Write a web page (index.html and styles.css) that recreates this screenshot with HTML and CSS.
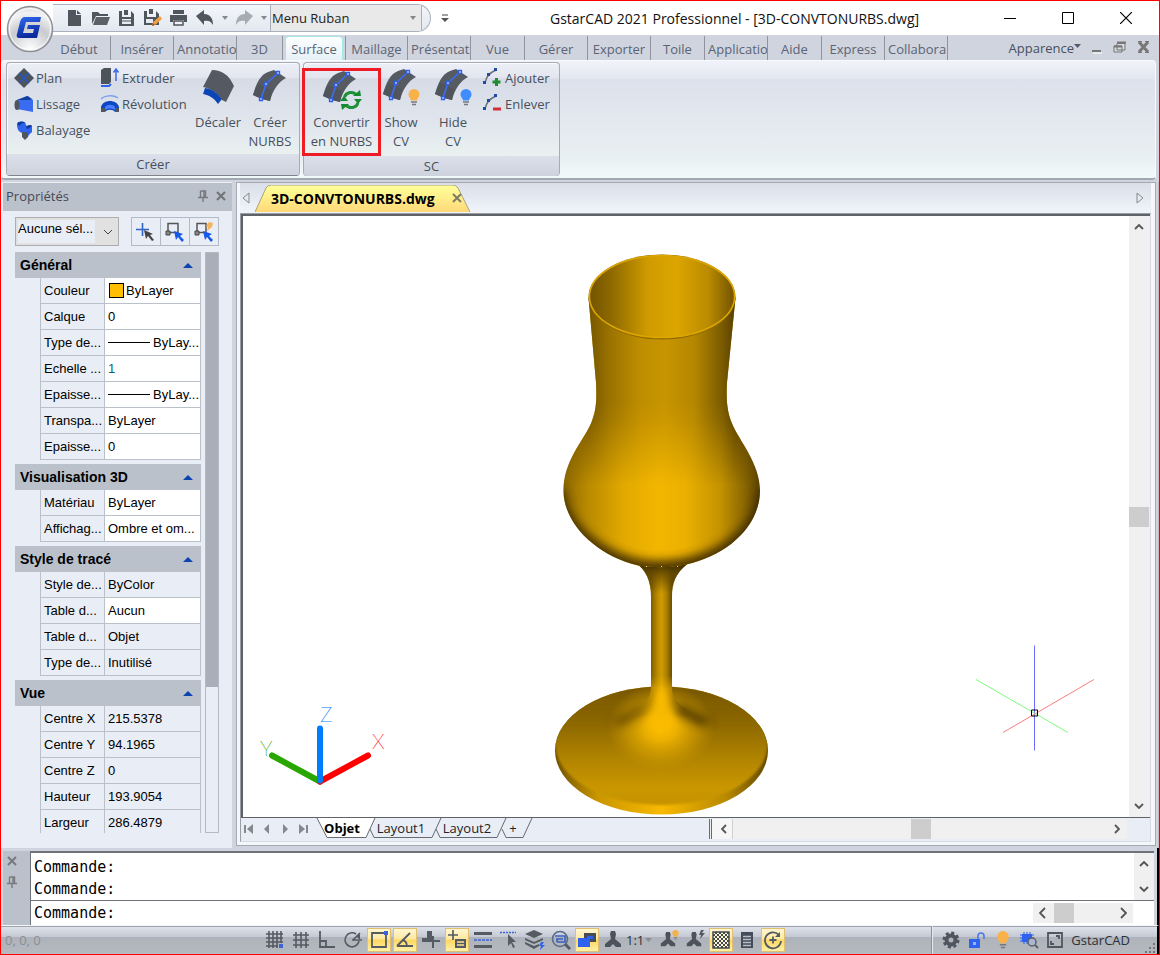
FILE: index.html
```html
<!DOCTYPE html>
<html lang="fr">
<head>
<meta charset="utf-8">
<title>GstarCAD 2021 Professionnel - [3D-CONVTONURBS.dwg]</title>
<link rel="stylesheet" href="styles.css">
</head>
<body>
<svg class="defs" width="0" height="0" aria-hidden="true">
  <symbol id="nurbs" viewBox="0 0 36 36">
    <path d="M1 25C4 14 8 5 16 2l6-2 12 8C26 12 21 20 18 31l-8-2z" fill="#565b62"/>
    <path d="M1 25l5-11 14 6-2 11-8-2z" fill="#50555c"/>
    <path d="M9 29l5-15L26 3" fill="none" stroke="#3d6cf0" stroke-width="1.600"/>
    <path d="M7.500 27.500h3v3h-3zM12.500 12.500h3v3h-3zM24.500 1.500h3v3h-3z" fill="#c8d4f5" stroke="#2f5fe8" stroke-width="1.300"/>
  </symbol>
  <symbol id="bulb" viewBox="0 0 12 17">
    <path d="M6 0a5.500 5.500 0 0 1 5.500 5.500c0 2.500-2 3.500-2.500 6H3C2.500 9 .5 8 .5 5.500A5.500 5.500 0 0 1 6 0z"/>
    <path d="M3 13h6M4 15.500h4" stroke="#77797d" stroke-width="1.400"/>
  </symbol>
  <symbol id="pin" viewBox="0 0 10 12">
    <path d="M2.500 1h5v6M2.500 1v6M6 1v6M0 7.500h10M5 8v4" fill="none" stroke="#77797d" stroke-width="1.400"/>
  </symbol>
  <symbol id="cross" viewBox="0 0 10 10">
    <path d="M1 1l8 8M9 1L1 9" fill="none" stroke="currentColor" stroke-width="2"/>
  </symbol>
  <symbol id="chev" viewBox="0 0 10 6">
    <path d="M1 1l4 4 4-4" fill="none" stroke="currentColor" stroke-width="1.800"/>
  </symbol>
  <symbol id="curve" viewBox="0 0 20 20">
    <path d="M2 15C3 9 6 5 13 2" fill="none" stroke="#6b7078" stroke-width="1.500"/>
    <path d="M0 13h3v3H0zM4 5h3v3H4zM11 0h3v3h-3z" fill="#1d4ca8"/>
  </symbol>
  <symbol id="figure" viewBox="0 0 20 20">
    <path d="M7 4l1-3h4l1 3-1 5 6 5v3h-5l-3-3-3 3H2v-3l6-5z" fill="#4d535b"/>
  </symbol>
</svg>

<div class="app">
  <header class="titlebar">
    <div class="quick">
      <button class="qbtn" aria-label="Nouveau"><svg width="18" height="18"><path d="M2 1h8v5h5v11H2z" fill="#50565e"/><path d="M11 1l4 4h-4z" fill="#50565e"/></svg></button>
      <button class="qbtn" aria-label="Ouvrir"><svg width="20" height="18"><path d="M1 15V3h6l2 2h8v2H5z" fill="#50565e"/><path d="M5 8h14l-3 8H2z" fill="#5b6168"/></svg></button>
      <button class="qbtn" aria-label="Enregistrer"><svg width="18" height="18"><path d="M1 2h3v6h9V2l3 3v12H1zM6 1h4v5H6z" fill="#50565e"/><path d="M4 10h9v5H4z" fill="#e7eaf0"/><path d="M4 12h9" stroke="#50565e"/></svg></button>
      <button class="qbtn" aria-label="Enregistrer sous"><svg width="20" height="19"><path d="M1 2h3v6h9V2l3 3v11H1zM6 0h4v5H6z" fill="#50565e"/><path d="M3 10h7v4H3z" fill="#e7eaf0"/><path d="M9 17l1-4 7-6 2 3-7 6z" fill="#f0a040"/><path d="M9 17l1-3 2 2z" fill="#8d5a20"/></svg></button>
      <button class="qbtn" aria-label="Imprimer"><svg width="20" height="18"><path d="M4 1h11v4H4zM1 6h17v7h-3v-2H4v2H1z" fill="#50565e"/><path d="M5 12h9v4H5z" fill="#f1f3f6" stroke="#50565e" stroke-width="1.500"/></svg></button>
      <button class="qbtn" aria-label="Annuler"><svg width="20" height="16"><path d="M1 6l8-6v4c6 0 9 4 9 11-2-4-5-5-9-4v4z" fill="#50565e"/></svg></button>
      <button class="qdrop" aria-label="Liste annuler"><svg width="6" height="4"><path d="M0 0h6L3 4z" fill="#85888e"/></svg></button>
      <button class="qbtn" aria-label="Rétablir"><svg width="20" height="16"><path d="M19 6l-8-6v4C5 4 2 8 2 15c2-4 5-5 9-4v4z" fill="#a7abb2"/></svg></button>
      <button class="qdrop" aria-label="Liste rétablir"><svg width="6" height="4"><path d="M0 0h6L3 4z" fill="#85888e"/></svg></button>
      <div class="workspace">
        <select aria-label="Espace de travail"><option>Menu Ruban</option></select>
        <svg width="6" height="4"><path d="M0 0h6L3 4z" fill="#85888e"/></svg>
      </div>
    </div>
    <button class="customize" aria-label="Personnaliser"><svg width="8" height="9"><path d="M1 1h6" stroke="#444"/><path d="M0 4h8L4 8z" fill="#555"/></svg></button>
    <h1 class="title">GstarCAD 2021 Professionnel - [3D-CONVTONURBS.dwg]</h1>
    <div class="winbtns">
      <button aria-label="Réduire"><svg width="12" height="12"><path d="M0 6.500h12" stroke="#000"/></svg></button>
      <button aria-label="Agrandir"><svg width="12" height="12"><path d="M.5.5h11v11H.5z" fill="none" stroke="#000"/></svg></button>
      <button aria-label="Fermer"><svg width="12" height="12"><path d="M0 0l12 12M12 0L0 12" stroke="#000" stroke-width="1.200"/></svg></button>
    </div>
    <button class="logo" aria-label="GstarCAD">
      <svg width="48" height="48" viewBox="0 0 48 48">
        <defs>
          <radialGradient id="orb" cx=".5" cy=".95" r="1"><stop offset="0" stop-color="#fff"/><stop offset=".5" stop-color="#c9cbcf"/><stop offset=".8" stop-color="#f1f2f3"/><stop offset="1" stop-color="#d4d5d8"/></radialGradient>
          <linearGradient id="gblue" x1="0" y1="0" x2=".3" y2="1"><stop offset="0" stop-color="#2f6af0"/><stop offset="1" stop-color="#0b2a9c"/></linearGradient>
        </defs>
        <circle cx="24" cy="24" r="22.500" fill="url(#orb)" stroke="#8d9096" stroke-width="1.500"/>
        <circle cx="24" cy="24" r="20.500" fill="none" stroke="#fff" stroke-opacity=".8"/>
        <path d="M19 12h16l-1 5H20l-3 11h10l1-4h-7l1-4h12l-3 13H13c-2 0-3-2-2-4l3-12c1-3 2-5 5-5z" fill="url(#gblue)"/>
      </svg>
    </button>
  </header>

  <nav class="tabs">
    <button class="tab w62">Début</button><button class="tab w62">Insérer</button><button class="tab w62 cut">Annotatio</button><button class="tab w46">3D</button><button class="tab active">Surface</button><button class="tab w62 first">Maillage</button><button class="tab w62 cut">Présentat</button><button class="tab w54">Vue</button><button class="tab w62">Gérer</button><button class="tab w62">Exporter</button><button class="tab w54">Toile</button><button class="tab w62 cut">Applicatio</button><button class="tab w54">Aide</button><button class="tab w62">Express</button><button class="tab w62 cut">Collabora</button>
    <button class="appearance">Apparence<svg width="7" height="4"><path d="M0 0h7L3.500 4z" fill="#555b66"/></svg></button>
    <div class="mdi">
      <button aria-label="Réduire le dessin"><svg width="12" height="14"><path d="M1 11h9" stroke="#777" stroke-width="2"/><path d="M2 13h9" stroke="#fff"/></svg></button>
      <button aria-label="Restaurer le dessin"><svg width="14" height="14"><path d="M4 3.500h8V10H4zM1 6h8v6H1z" fill="#d6dae2" stroke="#777"/><path d="M4 2.500h9M1 6.500h8" stroke="#777" stroke-width="2"/></svg></button>
      <button aria-label="Fermer le dessin"><svg width="14" height="14"><path d="M2 2l9 10M11 2L2 12" stroke="#777" stroke-width="3"/><path d="M1 1.500h4M8 1.500h4M1 12.500h4M8 12.500h4" stroke="#777"/></svg></button>
    </div>
  </nav>

  <section class="ribbon">
    <div class="panel create">
      <div class="tools">
        <div class="col">
          <button class="small"><svg width="20" height="20"><path d="M10 0l10 10-10 10L0 10z" fill="#4d535b"/><path d="M5 5l10 10M15 5L5 15" stroke="#2456c8" stroke-width="1.500"/></svg>Plan</button>
          <button class="small"><svg width="20" height="20"><path d="M3 6l11-4 5 4v12L3 15z" fill="#3a6cf2"/><path d="M3 6l10-4 5 3-3 1z" fill="#123f9e"/><ellipse cx="3" cy="11" rx="2.500" ry="5" fill="#50565e"/></svg>Lissage</button>
          <button class="small"><svg width="20" height="20"><path d="M3 5c0-3 4-4 7-3s1 4 3 4 3-2 5 0v6c-2 2-3 2-4 5h-5v-4c-3 0-6-3-6-8z" fill="#2f63ee"/><path d="M3 4c1-3 6-3 8-1-2 0-4 0-5 3zM12 6c2 0 4-2 6 0-2 1-3 3-5 3z" fill="#0d3b9f"/><path d="M8 12h6v5l-3 3-3-3z" fill="#50565e"/></svg>Balayage</button>
        </div>
        <div class="col second">
          <button class="small"><svg width="20" height="20"><path d="M1 2l3-2h7v14l-2 2H1z" fill="#4d535b"/><path d="M1 18h8l2-2" stroke="#2f63ee" stroke-width="2" fill="none"/><path d="M16 13V2M13.500 4.500L16 1l2.500 3.500" stroke="#3c6ae6" stroke-width="1.500" fill="none"/></svg>Extruder</button>
          <button class="small"><svg width="20" height="20"><path d="M1 5C5 1 14 1 18 4" fill="none" stroke="#7d9df0" stroke-width="1.500"/><path d="M1 13c2-8 16-8 18 0v5h-4c-2-3-8-3-10 0H1z" fill="#0d48c0"/><path d="M1 14h4v4H1zM15 14h4v4h-4z" fill="#50565e"/><path d="M5 13c2-3 8-3 10 0v3c-3-2-7-2-10 0z" fill="#4a7cff"/></svg>Révolution</button>
        </div>
        <button class="big"><svg width="36" height="36"><path d="M12 1c10 0 17 5 22 16l-8 16-4-2C18 24 12 20 3 18z" fill="#555a62"/><path d="M5 19c8 1 13 6 17 11l-4 5C14 29 9 26 3 25z" fill="#0c45b4"/></svg><span>Décaler</span></button>
        <button class="big"><svg width="36" height="36"><use href="#nurbs"/></svg><span>Créer<br>NURBS</span></button>
      </div>
      <h2>Créer</h2>
    </div>
    <div class="panel sc">
      <div class="tools">
        <button class="big marked"><svg width="42" height="40"><use href="#nurbs" width="36" height="36"/><path d="M22.500 26a7 7 0 0 1 12-2M36 32a7 7 0 0 1-12 2" fill="none" stroke="#1d9038" stroke-width="3"/><path d="M31 25h8l-1-6zM19 33h8l-7 6zM18 30h8l-4-5zM32 28h8l-4 5z" fill="#158a31"/></svg><span>Convertir<br>en NURBS</span></button>
        <button class="big narrow"><svg width="38" height="38"><use href="#nurbs" width="36" height="36"/><use href="#bulb" x="26" y="20" width="12" height="17" fill="#f9b24a"/></svg><span>Show<br>CV</span></button>
        <button class="big hide"><svg width="38" height="38"><use href="#nurbs" width="36" height="36"/><use href="#bulb" x="26" y="20" width="12" height="17" fill="#3f8cff"/></svg><span>Hide<br>CV</span></button>
        <div class="col last">
          <button class="small"><svg width="20" height="20"><use href="#curve" width="20" height="20"/><path d="M13.500 10v8M9.500 14h8" stroke="#218a35" stroke-width="3"/></svg>Ajouter</button>
          <button class="small"><svg width="20" height="20"><use href="#curve" width="20" height="20"/><path d="M10 15h8" stroke="#d22f3a" stroke-width="3"/></svg>Enlever</button>
        </div>
      </div>
      <h2>SC</h2>
    </div>
  </section>

  <main class="main">
    <aside class="props">
      <header class="phead"><h2>Propriétés</h2>
        <button aria-label="Épingler"><svg width="10" height="12"><use href="#pin"/></svg></button>
        <button aria-label="Fermer"><svg width="10" height="10"><use href="#cross"/></svg></button>
      </header>
      <div class="pick">
        <div class="selbox"><select aria-label="Sélection"><option>Aucune sél...</option></select><svg width="10" height="6" viewBox="0 0 10 6"><path d="M1 1l4 4 4-4" fill="none" stroke="#444"/></svg></div>
        <div class="pickbtns">
          <button aria-label="Ajouter à la sélection"><svg width="20" height="20"><path d="M6.500 1v13M0 7.500h13" stroke="#2f63c8" stroke-width="1.600"/><path d="M8 8l9 4-3 1 4 5-2 1-4-5-2 3z" fill="#444"/></svg></button>
          <button aria-label="Sélectionner des objets"><svg width="20" height="20"><path d="M3 1.500h10v9H3z" fill="none" stroke="#555" stroke-width="1.500"/><path d="M1 9h4v4H1z" fill="#888" stroke="#444"/><path d="M9 9l9 3-3 2 4 4-2 2-4-5-2 3z" fill="#1559e8"/></svg></button>
          <button aria-label="Sélection rapide"><svg width="20" height="20"><path d="M3 1.500h9v9H3z" fill="none" stroke="#555" stroke-width="1.500"/><path d="M1 9h4v4H1z" fill="#888" stroke="#444"/><path d="M15 0l4 1-1 4-5 4 1-4-2-1z" fill="#f5b45a"/><path d="M9 9l9 3-3 2 4 4-2 2-4-5-2 3z" fill="#1559e8"/></svg></button>
        </div>
      </div>
      <div class="gridwrap">
        <div class="grid">
          <section><h3>Général<i></i></h3>
            <table>
              <tr><th>Couleur</th><td><span class="swatch"></span>ByLayer</td></tr>
              <tr><th>Calque</th><td>0</td></tr>
              <tr><th>Type de...</th><td><span class="ltype"></span>ByLay...</td></tr>
              <tr><th>Echelle ...</th><td class="edit">1</td></tr>
              <tr><th>Epaisse...</th><td><span class="ltype"></span>ByLay...</td></tr>
              <tr><th>Transpa...</th><td>ByLayer</td></tr>
              <tr><th>Epaisse...</th><td>0</td></tr>
            </table></section>
          <section><h3>Visualisation 3D<i></i></h3>
            <table>
              <tr><th>Matériau</th><td>ByLayer</td></tr>
              <tr><th>Affichag...</th><td>Ombre et om...</td></tr>
            </table></section>
          <section><h3>Style de tracé<i></i></h3>
            <table>
              <tr><th>Style de...</th><td class="ro">ByColor</td></tr>
              <tr><th>Table d...</th><td>Aucun</td></tr>
              <tr><th>Table d...</th><td class="ro">Objet</td></tr>
              <tr><th>Type de...</th><td class="ro">Inutilisé</td></tr>
            </table></section>
          <section><h3>Vue<i></i></h3>
            <table>
              <tr><th>Centre X</th><td class="ro">215.5378</td></tr>
              <tr><th>Centre Y</th><td class="ro">94.1965</td></tr>
              <tr><th>Centre Z</th><td class="ro">0</td></tr>
              <tr><th>Hauteur</th><td class="ro">193.9054</td></tr>
              <tr><th>Largeur</th><td class="ro">286.4879</td></tr>
            </table></section>
        </div>
        <div class="pscroll"><div></div></div>
      </div>
    </aside>

    <section class="doc">
      <div class="doctabs">
        <button class="arrow" aria-label="Précédent"><svg width="8" height="12"><path d="M7 1v10L1 6z" fill="none" stroke="#85888e"/></svg></button>
        <div class="doctab">
          <svg class="shape" viewBox="0 0 216 27" preserveAspectRatio="none"><defs><linearGradient id="ytab" x1="0" y1="0" x2="0" y2="1"><stop offset="0" stop-color="#ffff9a"/><stop offset=".45" stop-color="#fff08a"/><stop offset="1" stop-color="#ffd878"/></linearGradient></defs><path d="M0 27L11 3q2-3 5-3h182q3 0 5 3l12 24" fill="url(#ytab)" stroke="#a9a27c"/></svg>
          <span>3D-CONVTONURBS.dwg</span>
          <button aria-label="Fermer l'onglet"><svg width="10" height="10"><use href="#cross"/></svg></button>
        </div>
        <button class="arrow next" aria-label="Suivant"><svg width="8" height="12"><path d="M1 1v10l6-5z" fill="none" stroke="#85888e"/></svg></button>
      </div>
      <div class="frame">
        <div class="view">
          <svg class="canvas" viewBox="243 217 886 600" role="img" aria-label="Verre 3D">
            <defs>
              <linearGradient id="cup" gradientUnits="userSpaceOnUse" x1="589" y1="0" x2="735" y2="0"><stop offset="0" stop-color="#765700"/><stop offset=".14" stop-color="#9a7200"/><stop offset=".35" stop-color="#be8e00"/><stop offset=".52" stop-color="#c79500"/><stop offset=".72" stop-color="#b58700"/><stop offset=".92" stop-color="#785900"/><stop offset="1" stop-color="#584000"/></linearGradient>
              <linearGradient id="bowl" gradientUnits="userSpaceOnUse" x1="563" y1="0" x2="760" y2="0"><stop offset="0" stop-color="#8a6600"/><stop offset=".12" stop-color="#b88900"/><stop offset=".3" stop-color="#e0a800"/><stop offset=".48" stop-color="#f3b600"/><stop offset=".62" stop-color="#ebb000"/><stop offset=".8" stop-color="#c39200"/><stop offset=".92" stop-color="#8a6700"/><stop offset="1" stop-color="#5c4400"/></linearGradient>
              <linearGradient id="fade" gradientUnits="userSpaceOnUse" x1="0" y1="405" x2="0" y2="485"><stop offset="0" stop-color="#fff"/><stop offset=".2" stop-color="#ddd"/><stop offset="1" stop-color="#000"/></linearGradient>
              <mask id="top" maskUnits="userSpaceOnUse" x="560" y="250" width="205" height="320"><path d="M560 250h205v320H560z" fill="url(#fade)"/></mask>
              <clipPath id="body"><path d="M588.500 298L596 383C597 402 596 412 591 424C583 442 563 462 563.500 492C564 524 596 556 638 566Q662 570 686 565C728 556 760 526 760 491C760 464 739 441 732 424C727 412 726 400 727 383L735.500 298z"/></clipPath>
              <clipPath id="foot"><ellipse cx="661.500" cy="751" rx="106.500" ry="64"/></clipPath>
              <linearGradient id="inside" x1="0" y1="0" x2="1" y2="0"><stop offset="0" stop-color="#725400"/><stop offset=".15" stop-color="#8e6900"/><stop offset=".4" stop-color="#cf9b00"/><stop offset=".6" stop-color="#dca500"/><stop offset=".82" stop-color="#ba8b00"/><stop offset="1" stop-color="#725300"/></linearGradient>
              <linearGradient id="stem" gradientUnits="userSpaceOnUse" x1="651" y1="0" x2="672" y2="0"><stop offset="0" stop-color="#7d5d00"/><stop offset=".3" stop-color="#b98a00"/><stop offset=".5" stop-color="#d19c00"/><stop offset=".75" stop-color="#a97e00"/><stop offset="1" stop-color="#694d00"/></linearGradient>
              <linearGradient id="neck" gradientUnits="userSpaceOnUse" x1="0" y1="564" x2="0" y2="594"><stop offset="0" stop-color="#3d2c00"/><stop offset=".35" stop-color="#5d4400" stop-opacity=".75"/><stop offset="1" stop-color="#5d4400" stop-opacity="0"/></linearGradient>
              <linearGradient id="disc" gradientUnits="userSpaceOnUse" x1="0" y1="687" x2="0" y2="806"><stop offset="0" stop-color="#775700"/><stop offset=".3" stop-color="#8c6700"/><stop offset=".6" stop-color="#b08300"/><stop offset=".85" stop-color="#ca9700"/><stop offset="1" stop-color="#c59300"/></linearGradient>
              <linearGradient id="edge" gradientUnits="userSpaceOnUse" x1="555" y1="0" x2="768" y2="0"><stop offset="0" stop-color="#6e5100"/><stop offset=".2" stop-color="#c99600"/><stop offset=".5" stop-color="#f8b900"/><stop offset=".8" stop-color="#b98a00"/><stop offset="1" stop-color="#624800"/></linearGradient>
              <radialGradient id="glow" gradientUnits="userSpaceOnUse" cx="0" cy="0" r="1" gradientTransform="translate(661 728) scale(54 44)"><stop offset="0" stop-color="#fabb00"/><stop offset=".3" stop-color="#efb300" stop-opacity=".95"/><stop offset=".65" stop-color="#d8a200" stop-opacity=".6"/><stop offset="1" stop-color="#c59300" stop-opacity="0"/></radialGradient>
              <linearGradient id="flare" gradientUnits="userSpaceOnUse" x1="640" y1="0" x2="683" y2="0"><stop offset="0" stop-color="#9a7200"/><stop offset=".3" stop-color="#c08f00"/><stop offset=".5" stop-color="#eab000"/><stop offset=".72" stop-color="#b88900"/><stop offset="1" stop-color="#6b4f00"/></linearGradient>
              <linearGradient id="flarefade" gradientUnits="userSpaceOnUse" x1="0" y1="676" x2="0" y2="718"><stop offset="0" stop-color="#000"/><stop offset=".3" stop-color="#fff"/><stop offset=".6" stop-color="#fff"/><stop offset="1" stop-color="#000"/></linearGradient>
              <mask id="flaremask" maskUnits="userSpaceOnUse" x="620" y="660" width="82" height="62"><path d="M620 660h82v62h-82z" fill="url(#flarefade)"/></mask>
              <filter id="soft" x="-50%" y="-50%" width="200%" height="200%"><feGaussianBlur stdDeviation="5"/></filter>
              <filter id="soft2" x="-50%" y="-50%" width="200%" height="200%"><feGaussianBlur stdDeviation="3"/></filter>
              <filter id="soft3"><feGaussianBlur stdDeviation="1"/></filter>
            </defs>
            <ellipse cx="661.500" cy="751" rx="106.500" ry="64" fill="url(#edge)"/>
            <g clip-path="url(#foot)">
              <ellipse cx="661.500" cy="745" rx="106" ry="60.500" fill="url(#disc)" filter="url(#soft3)"/>
              <ellipse cx="661" cy="728" rx="54" ry="44" fill="url(#glow)"/>
              <path d="M678 702q10 8 36 20l-14 4-22-12z" fill="#4a3500" opacity=".95" filter="url(#soft)"/>
              <path d="M646 702q-10 8-36 20l12 4 20-12z" fill="#5e4500" opacity=".85" filter="url(#soft)"/>
            </g>
            <path d="M651 590h21v98q0 5 2 9h-25q2-4 2-9z" fill="url(#stem)"/>
            <path d="M651 676v12C650 700 644 706 630 714l10 6h43l10-6C679 706 673 700 672 688v-12z" fill="url(#flare)" mask="url(#flaremask)"/>
            <path d="M658 690h7l10 34q-13 22-28 0z" fill="#fcbc00" opacity=".85" filter="url(#soft2)"/>
            <path d="M636 564c10 6 15 18 15 34h21c0-14 3-24 16-34z" fill="url(#stem)"/>
            <path d="M636 564c10 6 15 18 15 34h21c0-14 3-24 16-34z" fill="url(#neck)"/>
            <g clip-path="url(#body)">
              <path d="M560 290h204v285H560z" fill="url(#bowl)"/>
              <path d="M560 290h204v285H560z" fill="url(#cup)" mask="url(#top)"/>
              <path d="M555 490C555 527 596 560 638 569Q662 573 686 568C728 560 768 528 768 490" fill="none" stroke="#3d2c00" stroke-width="20" filter="url(#soft)" opacity=".9"/>
            </g>
            <ellipse cx="662" cy="297.500" rx="73.500" ry="42.500" fill="#8b6700"/>
            <ellipse cx="662" cy="297" rx="72.500" ry="41" fill="url(#inside)" stroke="#dda600" stroke-width="1.500"/>
            <path d="M646 567h1M661 567h1M677 567h1" stroke="#f5d060"/>
            <g class="ucs">
              <path d="M320 782l-48-26" stroke="#2aa600"/><path d="M320 782l48-26" stroke="#f00"/><path d="M320 781v-52" stroke="#007dff"/>
            </g>
            <g class="axes">
              <text x="260" y="756" fill="#2aa600">Y</text><text x="372" y="749" fill="#f00">X</text><text x="320" y="722" fill="#007dff">Z</text>
            </g>
            <g fill="none">
              <path d="M1034.500 646v105" stroke="#6c6cff"/>
              <path d="M976 680l92 53" stroke="#7dfa7d"/><path d="M1094 680l-91 53" stroke="#fa7d7d"/>
              <path d="M1031.500 710.500h6v6h-6z" stroke="#000"/>
            </g>
          </svg>
          <div class="vscroll">
            <button aria-label="Haut"><svg class="flip" width="10" height="6"><use href="#chev"/></svg></button>
            <div class="thumb"></div>
            <button aria-label="Bas"><svg width="10" height="6"><use href="#chev"/></svg></button>
          </div>
        </div>
        <div class="layouts">
          <div class="lnav">
            <button aria-label="Premier"><svg width="10" height="10"><path d="M1 1v8" stroke="#85888e" stroke-width="2"/><path d="M9 0v10L3 5z" fill="#85888e"/></svg></button>
            <button aria-label="Précédente"><svg width="10" height="10"><path d="M7 0v10L2 5z" fill="#85888e"/></svg></button>
            <button aria-label="Suivante"><svg width="10" height="10"><path d="M3 0v10l5-5z" fill="#85888e"/></svg></button>
            <button aria-label="Dernier"><svg width="10" height="10"><path d="M9 1v8" stroke="#85888e" stroke-width="2"/><path d="M1 0v10l6-5z" fill="#85888e"/></svg></button>
          </div>
          <div class="ltabs">
            <svg class="shape" width="220" height="21"><path d="M1 0l10 19.500h39L58.500 0z" fill="#fff"/><path d="M1 0l10 19.500h39L59 0M54 11l4 8.500h58L125 0M120 11l4 8.500h57L190 0M186 11l4 8.500h17L216 0" fill="none" stroke="#666b72"/></svg>
            <button class="cur">Objet</button><button>Layout1</button><button>Layout2</button><button>+</button>
          </div>
          <div class="hscroll">
            <button aria-label="Gauche"><svg width="6" height="10"><path d="M5 1L1 5l4 4" fill="none" stroke="#555" stroke-width="1.800"/></svg></button>
            <div class="thumb"></div>
            <button aria-label="Droite"><svg width="6" height="10"><path d="M1 1l4 4-4 4" fill="none" stroke="#555" stroke-width="1.800"/></svg></button>
          </div>
        </div>
      </div>
    </section>
  </main>

  <section class="cmd">
    <div class="cmdside">
      <button aria-label="Fermer"><svg width="10" height="10"><use href="#cross"/></svg></button>
      <button aria-label="Épingler"><svg width="10" height="12"><use href="#pin"/></svg></button>
    </div>
    <div class="cmdbox">
      <div class="history"><div class="lines"><p>Commande:</p><p>Commande:</p></div>
        <div class="cscroll"><button aria-label="Haut"><svg class="flip" width="10" height="6"><use href="#chev"/></svg></button><button aria-label="Bas"><svg width="10" height="6"><use href="#chev"/></svg></button></div>
      </div>
      <div class="prompt"><label for="cmdline">Commande:</label><input id="cmdline" type="text">
        <div class="pscr"><button aria-label="Gauche"><svg width="8" height="12"><path d="M6 1L1 6l5 5" fill="none" stroke="#555" stroke-width="1.800"/></svg></button><div class="thumb"></div><button aria-label="Droite"><svg width="8" height="12"><path d="M2 1l5 5-5 5" fill="none" stroke="#555" stroke-width="1.800"/></svg></button></div>
      </div>
    </div>
  </section>

  <footer class="status">
    <span class="coords">0, 0, 0</span>
    <div class="modes">
      <button aria-label="Accrochage"><svg width="20" height="20"><path d="M4 1v17M8 1v17M12 1v17M16 1v12M1 4h17M1 8h17M1 12h17M1 16h12" stroke="#555b63" stroke-width="1.600"/><path d="M14 14h4v4h-4z" fill="#3c63d8"/></svg></button>
      <button aria-label="Grille"><svg width="20" height="20"><path d="M5 2v16M10 2v16M15 2v16M2 5h16M2 10h16M2 15h16" stroke="#555b63" stroke-width="1.600"/></svg></button>
      <button aria-label="Ortho"><svg width="20" height="20"><path d="M3 1v16h15M3 11h6v6" fill="none" stroke="#555b63" stroke-width="1.800"/></svg></button>
      <button aria-label="Polaire"><svg width="20" height="20"><path d="M16 11a7 7 0 1 1-3-7M10 10l7-7M9 10h10" fill="none" stroke="#555b63" stroke-width="1.600"/><path d="M13 6l4 4v-6z" fill="#555b63"/></svg></button>
      <button class="on" aria-label="Accrochage objets"><svg width="20" height="20"><path d="M3 3h14v14H3z" fill="none" stroke="#555b63" stroke-width="1.800"/><path d="M15 1h4v4h-4z" fill="#3c63d8"/></svg></button>
      <button class="on" aria-label="Repérage"><svg width="20" height="20"><path d="M2 16h16M2 16L15 3M7 10c3 0 5 3 5 6" fill="none" stroke="#555b63" stroke-width="1.800"/></svg></button>
      <button aria-label="SCU dynamique"><svg width="20" height="20"><path d="M6 1h5v11H1V8h5z" fill="#555b63"/><path d="M12 6v12M11 11h8" stroke="#555b63" stroke-width="2"/></svg></button>
      <button class="on" aria-label="Saisie dynamique"><svg width="20" height="20"><path d="M6 0v10M1 5h10" stroke="#555b63" stroke-width="1.700"/><path d="M8 9h11v9H8z" fill="#555b63"/><path d="M10 12h7M10 15h7" stroke="#ffe28a" stroke-width="1.300"/></svg></button>
      <button aria-label="Épaisseur de ligne"><svg width="20" height="20"><path d="M1 3.500h18M1 16.500h18" stroke="#555b63" stroke-width="3"/><path d="M1 10h18" stroke="#3c63d8" stroke-width="1.500" stroke-dasharray="3 1"/></svg></button>
      <button aria-label="Sélection cyclique"><svg width="20" height="20"><path d="M1 2.500h16" stroke="#3c63d8" stroke-width="1.500" stroke-dasharray="2 1"/><path d="M9 4l8 8-4 0 3 5-2 1-2-5-3 3z" fill="#555b63"/></svg></button>
      <button aria-label="Calques"><svg width="20" height="20"><path d="M9 0l9 4-9 4-9-4zM0 8l9 4 9-4v2l-9 4-9-4zM0 12l9 4 5-2v2l-5 3-9-5z" fill="#555b63"/><path d="M16 12l3 0-2 3h3l-5 5 1-4h-2z" fill="#2f63ee"/></svg></button>
      <button aria-label="Vue loupe"><svg width="20" height="20"><circle cx="9" cy="9" r="7.500" fill="none" stroke="#5a6a8c" stroke-width="1.600"/><path d="M14 14l5 5" stroke="#555b63" stroke-width="3"/><path d="M4 6h10v6H6M6 12V9h6" fill="none" stroke="#3860c4" stroke-width="1.600"/></svg></button>
      <button class="on" aria-label="Modèle"><svg width="20" height="20"><path d="M7 3h12v9H7z" fill="#474d57"/><path d="M1 8h12v9H1z" fill="#2d62f0"/><path d="M10 6h6v3h-6z" fill="#2d62f0"/></svg></button>
      <button aria-label="Échelle d'annotation"><svg width="20" height="20"><use href="#figure"/></svg></button>
      <div class="scale"><select aria-label="Échelle"><option>1:1</option></select><svg width="7" height="4"><path d="M0 0h7L3.500 4z" fill="#8a8d93"/></svg></div>
      <button aria-label="Visibilité d'annotation"><svg width="20" height="20"><use href="#figure" y="1" width="18" height="18"/><use href="#bulb" x="13" y="0" width="7" height="10" fill="#f5b04a"/></svg></button>
      <button aria-label="Échelle automatique"><svg width="20" height="20"><use href="#figure" y="1" width="18" height="18"/><path d="M16 0h3l-2 3h3l-5 6 1-4h-2z" fill="#555b63"/></svg></button>
      <button class="on" aria-label="Transparence"><svg width="20" height="20"><defs><pattern id="check" width="4" height="4" patternUnits="userSpaceOnUse"><path d="M0 0h4v4H0z" fill="#444a52"/><path d="M0 0h2v2H0zM2 2h2v2H2z" fill="#fff4d0"/></pattern></defs><path d="M2 2h16v16H2z" fill="url(#check)" stroke="#444a52" stroke-width="1.500"/></svg></button>
      <button aria-label="Propriétés rapides"><svg width="20" height="20"><path d="M4 2h12v16H4z" fill="#434c58"/><path d="M6 6.500h8M6 9.500h8M6 12.500h8M6 15.500h8" stroke="#b8bdc6" stroke-width="1.300"/></svg></button>
      <button class="on" aria-label="Cycle"><svg width="20" height="20"><path d="M16 5a8 8 0 1 0 2 6M6.500 10h7M10 6.500v7" fill="none" stroke="#555b63" stroke-width="1.800"/><path d="M17 2v5h-5z" fill="#555b63"/></svg></button>
    </div>
    <div class="tray">
      <button aria-label="Paramètres"><svg width="20" height="20"><circle cx="10" cy="10" r="4.500" fill="none" stroke="#50565e" stroke-width="4"/><circle cx="10" cy="10" r="7" fill="none" stroke="#50565e" stroke-width="3" stroke-dasharray="3 2.500"/></svg></button>
      <button aria-label="Verrouillage"><svg width="20" height="20"><path d="M2 9h11v9H2z" fill="#2f63ee"/><path d="M11 9V6a3 3 0 0 1 6 0v3" fill="none" stroke="#4f77e8" stroke-width="1.600"/><path d="M6 12h3v3H6z" fill="#9bb3f5"/></svg></button>
      <button aria-label="Isoler"><svg width="14" height="18"><use href="#bulb" fill="#f9b24a"/></svg></button>
      <button aria-label="Performances"><svg width="20" height="20"><path d="M3 4h10v8H3z" fill="#2f63ee"/><path d="M1 5h14M1 8h14M1 11h14M5 2v12M8 2v12M11 2v12" stroke="#2f63ee"/><circle cx="13" cy="12" r="4" fill="#aab6d2" stroke="#59606a" stroke-width="1.500"/><path d="M16 15l3 3" stroke="#59606a" stroke-width="2"/></svg></button>
      <button aria-label="Plein écran"><svg width="20" height="20"><path d="M3 3h14v14H3zM11 6h3v3M9 14H6v-3" fill="none" stroke="#50565e" stroke-width="1.800"/></svg></button>
      <span>GstarCAD</span>
    </div>
    <svg class="grip" width="11" height="11"><path d="M8 0h2v2H8zM4 4h2v2H4zM8 4h2v2H8zM0 8h2v2H0zM4 8h2v2H4zM8 8h2v2H8z" fill="#72757b"/></svg>
  </footer>
</div>
</body>
</html>
```
FILE: styles.css
```css
* { box-sizing: border-box; }
body, h1, h2, h3, p { margin: 0; font-weight: 400; }
body {
  font-family: "Open Sans", "Noto Sans", sans-serif;
  font-size: 13px;
  color: #47505e;
}
button, select, input {
  margin: 0;
  padding: 0;
  border: 0;
  background: none;
  font: inherit;
  color: inherit;
  appearance: none;
  outline: none;
}
button { display: flex; align-items: center; justify-content: center; }
svg { display: block; flex: none; }
.defs { position: absolute; }

.app {
  display: flex;
  flex-direction: column;
  height: 100vh;
  min-height: 600px;
  border: 1px solid #f00;
  background: #d0d4de;
  overflow: hidden;
}

/* title bar */
.titlebar {
  position: relative;
  display: flex;
  align-items: center;
  height: 34px;
  background: #fff;
  flex: none;
}
.quick {
  display: flex;
  align-items: center;
  height: 28px;
  margin-left: 52px;
  padding: 0 8px 0 9px;
  border: 1px solid #a9afbb;
  border-left: 0;
  border-radius: 0 14px 14px 0;
  background: linear-gradient(#f3f6fa, #e3e8f0);
}
.qbtn { width: 26px; height: 26px; }
.qdrop { width: 13px; height: 26px; }
.workspace {
  display: flex;
  align-items: center;
  width: 152px;
  height: 26px;
  padding-right: 5px;
  border: 1px solid #a9afbb;
  border-width: 0 1px;
  background: #e9e9e9;
}
.workspace select { flex: 1; padding-left: 1px; color: #222; }
.customize { width: 16px; height: 24px; margin-left: 6px; }
.title {
  flex: 1;
  margin-left: 97px;
  font-size: 14px;
  color: #111;
  white-space: nowrap;
}
.winbtns { display: flex; margin-right: 4px; }
.winbtns button { width: 58px; height: 32px; }
.logo { position: absolute; left: 5px; top: 4px; z-index: 3; }

/* ribbon tabs */
.tabs {
  display: flex;
  align-items: stretch;
  height: 25px;
  padding: 1px 8px 0 47px;
  flex: none;
}
.tab {
  flex: none;
  height: 24px;
  padding-top: 1px;
  border-right: 1px solid #8e939d;
  color: #5a6475;
  overflow: hidden;
  white-space: nowrap;
}
.w62 { width: 63px; }
.w54 { width: 54px; }
.w46 { width: 46px; }
.cut { justify-content: flex-start; padding-left: 3px; }
.tab.first { border-left: 1px solid #8e939d; }
.tab.active {
  width: 58px;
  margin: 0 2px;
  border: 1px solid #a4e8ea;
  border-bottom: 0;
  border-radius: 4px 4px 0 0;
  background: linear-gradient(#fdfefe, #e6f1f6);
}
.appearance { margin-left: auto; }
.appearance svg { align-self: flex-start; margin-top: 8px; }
.mdi { display: flex; gap: 10px; margin: 0 0 3px 10px; }

/* ribbon */
.ribbon {
  display: flex;
  gap: 3px;
  flex: none;
  height: 120px;
  margin: 0 3px 2px 0;
  padding: 1px 4px 2px 4px;
  border: 1px solid #f7f9fc;
  border-bottom: 2px solid #a3a7b0;
  border-radius: 4px;
  background: linear-gradient(#f1f3f9 0, #e3e7f0 15%, #dce1eb 16%, #e8eff2 80%, #f1fafa 100%);
}
.panel {
  display: flex;
  flex-direction: column;
  height: 114px;
  border: 1px solid #a7abb4;
  border-bottom-color: #7f838c;
  border-radius: 4px;
  background: linear-gradient(#eceff6 0, #e3e6ef 13%, #d6dbe6 14%, #e2e8ee 60%, #e9f0f0 80%);
  box-shadow: inset 1px 1px 0 #f8fafc;
}
.create { width: 294px; }
.sc { width: 257px; }
.panel h2 {
  height: 21px;
  background: linear-gradient(#dce0ea, #cdd2dd);
  border-radius: 0 0 3px 3px;
  font-size: 13px;
  line-height: 20px;
  text-align: center;
}
.tools { display: flex; flex: 1; padding-top: 1px; }
.col { display: flex; flex-direction: column; flex: none; padding: 1px 0 0 7px; width: 86px; }
.col.second { width: 99px; }
.col.last { width: 74px; padding-left: 4px; }
.small { justify-content: flex-start; gap: 2px; height: 26px; white-space: nowrap; }
.big {
  flex: none;
  flex-direction: column;
  justify-content: flex-start;
  width: 52px;
  height: 90px;
  padding-top: 5px;
  line-height: 19px;
}
.big svg { height: 38px; margin-bottom: 6px; }
.big.narrow { width: 40px; }
.big.hide { margin-left: 6px; }
.big.marked {
  width: 79px;
  height: 88px;
  margin: 4px 0 0 -2px;
  padding-top: 0;
  border: 3px solid #ee1c25;
}
.big.marked svg { height: 40px; margin: 0 0 2px 2px; }

/* properties */
.main { display: flex; flex: 1; min-height: 0; gap: 4px; padding-right: 2px; border-right: 1px solid #bbb; }
.props {
  display: flex;
  flex-direction: column;
  flex: none;
  width: 231px;
  padding: 1px 0 0 2px;
  background: #e9edf6;
}
.phead {
  display: flex;
  align-items: center;
  gap: 8px;
  height: 28px;
  padding: 0 6px 2px 3px;
  background: #bbc1cb;
  color: #6f7378;
  flex: none;
}
.phead h2 { flex: 1; font-size: 13px; color: #434a56; }
.pick { display: flex; justify-content: space-between; padding: 6px 13px 6px 12px; flex: none; }
.selbox {
  display: flex;
  align-items: center;
  width: 104px;
  height: 29px;
  padding: 2px 5px 2px 2px;
  border: 1px solid #adadad;
  background: #e1e1e1;
}
.selbox select {
  flex: 1;
  min-width: 0;
  height: 23px;
  margin-right: 8px;
  padding-bottom: 6px;
  background: #e9edf6;
  font: 13px "Liberation Sans", sans-serif;
  color: #000;
}
.pickbtns { display: flex; }
.pickbtns button { width: 30px; height: 29px; margin-left: -1px; border: 1px solid #b3bac6; }
.gridwrap {
  display: flex;
  flex: 1;
  min-height: 0;
  gap: 4px;
  margin: 0 13px 15px 12px;
  font-family: "Liberation Sans", sans-serif;
  color: #000;
}
.grid { flex: 1; overflow: hidden; }
.grid section { margin-bottom: 4px; }
.grid h3 {
  display: flex;
  align-items: center;
  justify-content: space-between;
  height: 26px;
  padding: 0 8px 0 5px;
  background: #bbc1cb;
  font-size: 14px;
  font-weight: 700;
}
.grid i { border: 5px solid transparent; border-top: 0; border-bottom-color: #0b44b0; }
.grid table { width: 161px; margin-left: 25px; border-collapse: separate; border-spacing: 0; table-layout: fixed; }
.grid th, .grid td {
  height: 26px;
  padding: 0 0 0 3px;
  border: 1px solid #bbc1cb;
  border-top: 0;
  font-size: 13px;
  font-weight: 400;
  line-height: 16px;
  text-align: left;
  white-space: nowrap;
}
.grid th { width: 65px; }
.grid td { border-left: 0; background: #fff; }
.grid .ro { background: #e9edf6; }
.grid .edit { color: #0a5f80; }
.swatch {
  display: inline-block;
  width: 15px;
  height: 15px;
  margin: 0 2px 0 1px;
  border: 1px solid #000;
  background: #ffbf00;
  vertical-align: -3px;
}
.ltype { display: inline-block; width: 42px; margin: 0 3px 4px 0; border-top: 1px solid #000; }
.pscroll { width: 14px; border: 1px solid #b3bac6; }
.pscroll div { height: 75%; background: #aaaeb9; }

/* document window */
.doc {
  display: flex;
  flex-direction: column;
  flex: 1;
  min-width: 0;
  margin-bottom: 2px;
  border: 1px solid #a4a9b4;
  background: #f4f7fb;
  padding: 0 4px 3px 3px;
}
.doctabs {
  display: flex;
  align-items: center;
  height: 30px;
  padding: 0 7px 0 2px;
  background: linear-gradient(#d9dee8, #f1f5fb);
  flex: none;
}
.arrow { width: 8px; }
.arrow.next { margin-left: auto; }
.doctab {
  position: relative;
  display: flex;
  align-items: center;
  justify-content: space-between;
  width: 216px;
  height: 28px;
  margin-left: 5px;
  padding: 0 9px 0 16px;
  color: #000;
}
.doctab .shape { position: absolute; left: 0; top: 1px; width: 216px; height: 27px; }
.doctab span { position: relative; font-size: 14px; font-weight: 700; }
.doctab button { position: relative; color: #7f7a66; }
.frame {
  display: flex;
  flex-direction: column;
  flex: 1;
  min-height: 0;
  border: 1px solid #9a9da2;
  border-right-color: #d8dbe2;
  border-bottom-color: #d8dbe2;
}
.view {
  display: flex;
  flex: 1;
  min-height: 0;
  border: 2px solid #5f6267;
  border-right: 0;
  border-bottom-width: 1px;
  background: #fff;
}
.canvas { flex: 1; min-width: 0; height: 100%; }
.ucs { stroke-width: 6; stroke-linecap: round; }
.axes { font: 100 21px Roboto, sans-serif; }
.vscroll {
  display: flex;
  flex-direction: column;
  align-items: center;
  justify-content: space-between;
  width: 21px;
  padding: 3px 2px 3px 0;
  background: #f0f0f0;
  color: #555;
}
.vscroll button { width: 20px; height: 16px; }
.flip { transform: rotate(180deg); }
.thumb { background: #cdcdcd; width: 20px; height: 20px; }
.layouts { display: flex; align-items: stretch; height: 23px; padding-bottom: 1px; background: #e9edf6; flex: none; }
.lnav { display: flex; gap: 8px; padding-left: 3px; }
.ltabs { position: relative; display: flex; width: 220px; margin-left: 8px; color: #222; }
.ltabs .shape { position: absolute; left: 0; top: 0; }
.ltabs button { position: relative; height: 19px; width: 66px; }
.ltabs .cur { width: 52px; font-weight: 700; color: #000; }
.ltabs button:last-child { width: 26px; }
.hscroll {
  display: flex;
  align-items: center;
  justify-content: space-between;
  width: 418px;
  margin: 1px 23px 1px auto;
  padding: 0 7px 0 9px;
  border-left: 3px double #666b72;
  background: linear-gradient(to right, #f6f6f6 20px, #d0d0d0 20px 21px, #f0f0f0 21px);
}

/* command window */
.cmd {
  display: flex;
  flex: none;
  border-right: 2px solid #000;
  padding: 3px 0 0 2px;
}
.cmdside {
  display: flex;
  flex-direction: column;
  gap: 10px;
  width: 27px;
  padding: 5px 0 0 4px;
  background: #bbc1cb;
  color: #77797d;
  align-items: flex-start;
}
.cmdbox {
  flex: 1;
  border: 1px solid #6f7278;
  border-width: 2px 0 0 1px;
  background: #fff;
  font: 15px/22px "DejaVu Sans Mono", monospace;
  color: #000;
  margin-right: 3px;
}
.history { display: flex; justify-content: space-between; padding-left: 3px; border-bottom: 1px solid #6f7278; }
.lines { padding: 3px 0 0; }
.cscroll {
  display: flex;
  flex-direction: column;
  justify-content: space-between;
  padding: 8px 5px;
  background: #f0f0f0;
  color: #555;
}
.prompt { display: flex; align-items: center; height: 24px; padding: 0 21px 0 3px; }
.prompt input { flex: 1; }
.pscr { display: flex; align-items: center; width: 100px; height: 20px; padding: 0 6px; background: #f0f0f0; }
.pscr .thumb { margin: 0 auto 0 7px; }

/* status bar */
.status {
  position: relative;
  display: flex;
  align-items: center;
  height: 29px;
  flex: none;
  border-top: 1px solid #f4f6f9;
  border-right: 2px solid #000;
  background: linear-gradient(#9fa3ab 0 1px, #dde1e9 1px, #c5c9d3 38%, #aeb2ba 40%, #b6babf 100%);
}
.coords { width: 261px; padding-left: 4px; color: #8b8f96; }
.modes { display: flex; align-items: center; }
.modes button { width: 26px; height: 25px; }
.modes .on {
  width: 24px;
  height: 24px;
  margin: 0 1px;
  border: 1px solid #e0c070;
  background: linear-gradient(#fff6d0 0, #ffe9a0 45%, #ffd75e 50%, #fff0a8 100%);
}
.scale { display: flex; align-items: center; justify-content: space-between; width: 30px; padding-right: 4px; }
.scale select { width: 20px; color: #2c3138; }
.tray {
  display: flex;
  align-items: center;
  align-self: stretch;
  margin-left: auto;
  padding: 0 27px 0 6px;
  border-left: 1px solid #8d9199;
  box-shadow: inset 1px 0 0 #e4e7ec;
  color: #2c3138;
}
.tray button { width: 26px; height: 26px; }
.tray span { margin-left: 3px; }
.grip { position: absolute; right: 1px; bottom: 0; }
```
